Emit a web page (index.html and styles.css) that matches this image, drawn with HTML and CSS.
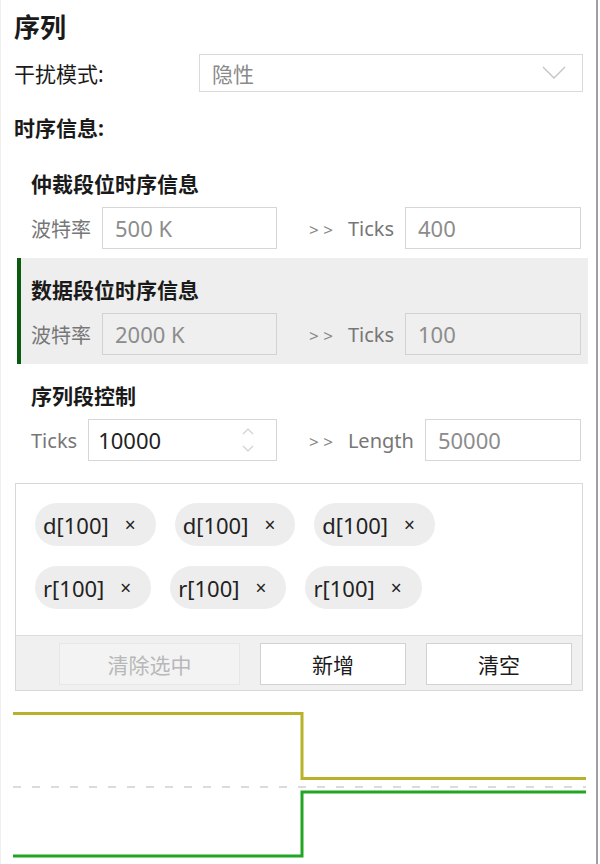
FILE: index.html
```html
<!DOCTYPE html>
<html>
  <head>
    <title>序列</title>
    <link rel="stylesheet" href="styles.css">
  </head>
  <body>
    <div class="panel">
      <h1 class="title">序列</h1>
      <div class="mode-row">
        <span class="mode-label">干扰模式:</span>
        <div class="select">
          <span>隐性</span>
          <svg class="chevron" width="24" height="14" viewBox="0 0 24 14">
            <path d="M1 1 L12 12 L23 1" fill="none" stroke="#c4c4c4" stroke-width="1.4" />
          </svg>
        </div>
      </div>
      <div class="section-label">时序信息:</div>

      <div class="group">
        <div class="group-title">仲裁段位时序信息</div>
        <div class="row">
          <div class="col col-left">
            <span class="label">波特率</span>
            <div class="input muted">500 K</div>
          </div>
          <div class="col col-right">
            <span class="label"><b>&gt; &gt;</b>Ticks</span>
            <div class="input muted">400</div>
          </div>
        </div>
      </div>

      <div class="group active">
        <div class="group-title">数据段位时序信息</div>
        <div class="row">
          <div class="col col-left">
            <span class="label">波特率</span>
            <div class="input muted">2000 K</div>
          </div>
          <div class="col col-right">
            <span class="label"><b>&gt; &gt;</b>Ticks</span>
            <div class="input muted">100</div>
          </div>
        </div>
      </div>

      <div class="group">
        <div class="group-title">序列段控制</div>
        <div class="row">
          <div class="col col-left">
            <span class="label">Ticks</span>
            <div class="input spin">
              <span>10000</span>
              <svg class="spinner" width="12" height="26" viewBox="0 0 12 26">
                <path d="M1 7 L6 2 L11 7 M1 19 L6 24 L11 19" fill="none" stroke="#d0d0d0" stroke-width="1.2" />
              </svg>
            </div>
          </div>
          <div class="col col-right">
            <span class="label"><b>&gt; &gt;</b>Length</span>
            <div class="input muted">50000</div>
          </div>
        </div>
      </div>

      <div class="tag-box">
        <div class="tags">
          <span class="chip">d[100]<i>×</i></span>
          <span class="chip">d[100]<i>×</i></span>
          <span class="chip">d[100]<i>×</i></span>
          <span class="chip">r[100]<i>×</i></span>
          <span class="chip">r[100]<i>×</i></span>
          <span class="chip">r[100]<i>×</i></span>
        </div>
        <div class="actions">
          <button class="btn wide" disabled>清除选中</button>
          <button class="btn">新增</button>
          <button class="btn">清空</button>
        </div>
      </div>

      <svg class="wave" width="596" height="164" viewBox="0 0 596 164">
        <path d="M12 13.5 H301 V78.5 H585" fill="none" stroke="#b7b22a" stroke-width="3" />
        <path d="M12 87 H585" fill="none" stroke="#cfcfcf" stroke-width="1.5" stroke-dasharray="8 11" />
        <path d="M12 156 H301 V92 H585" fill="none" stroke="#22a522" stroke-width="3" />
      </svg>
    </div>
  </body>
</html>
```

FILE: styles.css
```css
body {
  margin: 0;
  font-family: "Noto Sans", "Noto Sans CJK SC", sans-serif;
  color: #1a1a1a;
  background: #fff;
}
.panel {
  width: 595px;
  height: 864px;
  overflow: hidden;
  border-left: 1px solid #f0f0f0;
  border-right: 2px solid #a0a0a0;
  background: #fff;
}
.title {
  margin: 0;
  padding: 12px 0 0 13px;
  font-size: 26px;
  line-height: 30px;
  font-weight: bold;
}
.mode-row {
  display: flex;
  align-items: center;
  margin-top: 12px;
  padding-left: 13px;
}
.mode-label {
  width: 185px;
  font-size: 21px;
}
.select {
  display: flex;
  align-items: center;
  justify-content: space-between;
  width: 384px;
  height: 38px;
  box-sizing: border-box;
  border: 1px solid #dadada;
  padding: 0 16px 0 12px;
  color: #8a8a8a;
  font-size: 21px;
}
.section-label {
  margin-top: 24px;
  padding-left: 13px;
  font-size: 21px;
  font-weight: bold;
  line-height: 24px;
}
.group {
  margin: 0 8px 0 16px;
  border-left: 4px solid transparent;
  padding: 20px 0 9px 10px;
}
.section-label + .group {
  margin-top: 12px;
}
.group.active {
  background: #eeeeee;
  border-left-color: #0a5a0f;
}
.group-title {
  font-size: 21px;
  font-weight: bold;
  line-height: 24px;
  margin-bottom: 11px;
}
.row {
  display: flex;
  gap: 32px;
}
.col {
  display: flex;
  align-items: center;
  gap: 11px;
}
.col-left {
  width: 246px;
}
.col-right {
  width: 272px;
}
.label {
  color: #777;
  font-size: 20px;
  white-space: nowrap;
}
.label b {
  font-weight: normal;
  font-size: 17px;
  color: #888;
  margin-right: 15px;
}
.input {
  flex: 1;
  height: 42px;
  box-sizing: border-box;
  border: 1px solid #d6d6d6;
  background: #fff;
  display: flex;
  align-items: center;
  padding-left: 12px;
  font-size: 22px;
  color: #222;
}
.input.muted {
  color: #8c8c8c;
}
.active .input {
  background: #efefef;
  border-color: #d2d2d2;
}
.input.spin {
  justify-content: space-between;
  padding: 0 22px 0 9px;
}
.tag-box {
  margin: 13px 0 0 14px;
  width: 566px;
  border: 1px solid #d8d8d8;
}
.tags {
  display: flex;
  flex-wrap: wrap;
  gap: 20px 19px;
  width: 440px;
  padding: 19px 0 26px 19px;
}
.chip {
  display: inline-flex;
  align-items: center;
  height: 43px;
  padding: 0 20px 0 8px;
  border-radius: 22px;
  background: #ededed;
  font-size: 22px;
  color: #222;
}
.chip i {
  font-style: normal;
  margin-left: 16px;
  font-size: 19px;
}
.actions {
  display: flex;
  justify-content: flex-end;
  gap: 20px;
  padding: 7px 10px 5px 0;
  background: #f0f0f0;
  border-top: 1px solid #dcdcdc;
}
.btn {
  width: 146px;
  height: 42px;
  border: 1px solid #d2d2d2;
  background: #fff;
  font-family: "Noto Sans CJK SC", sans-serif;
  font-size: 21px;
  color: #1a1a1a;
}
.btn.wide {
  width: 181px;
}
.btn:disabled {
  background: #f3f3f3;
  border-color: #e6e6e6;
  color: #b8b8b8;
}
.wave {
  display: block;
  margin-top: 9px;
}
```
